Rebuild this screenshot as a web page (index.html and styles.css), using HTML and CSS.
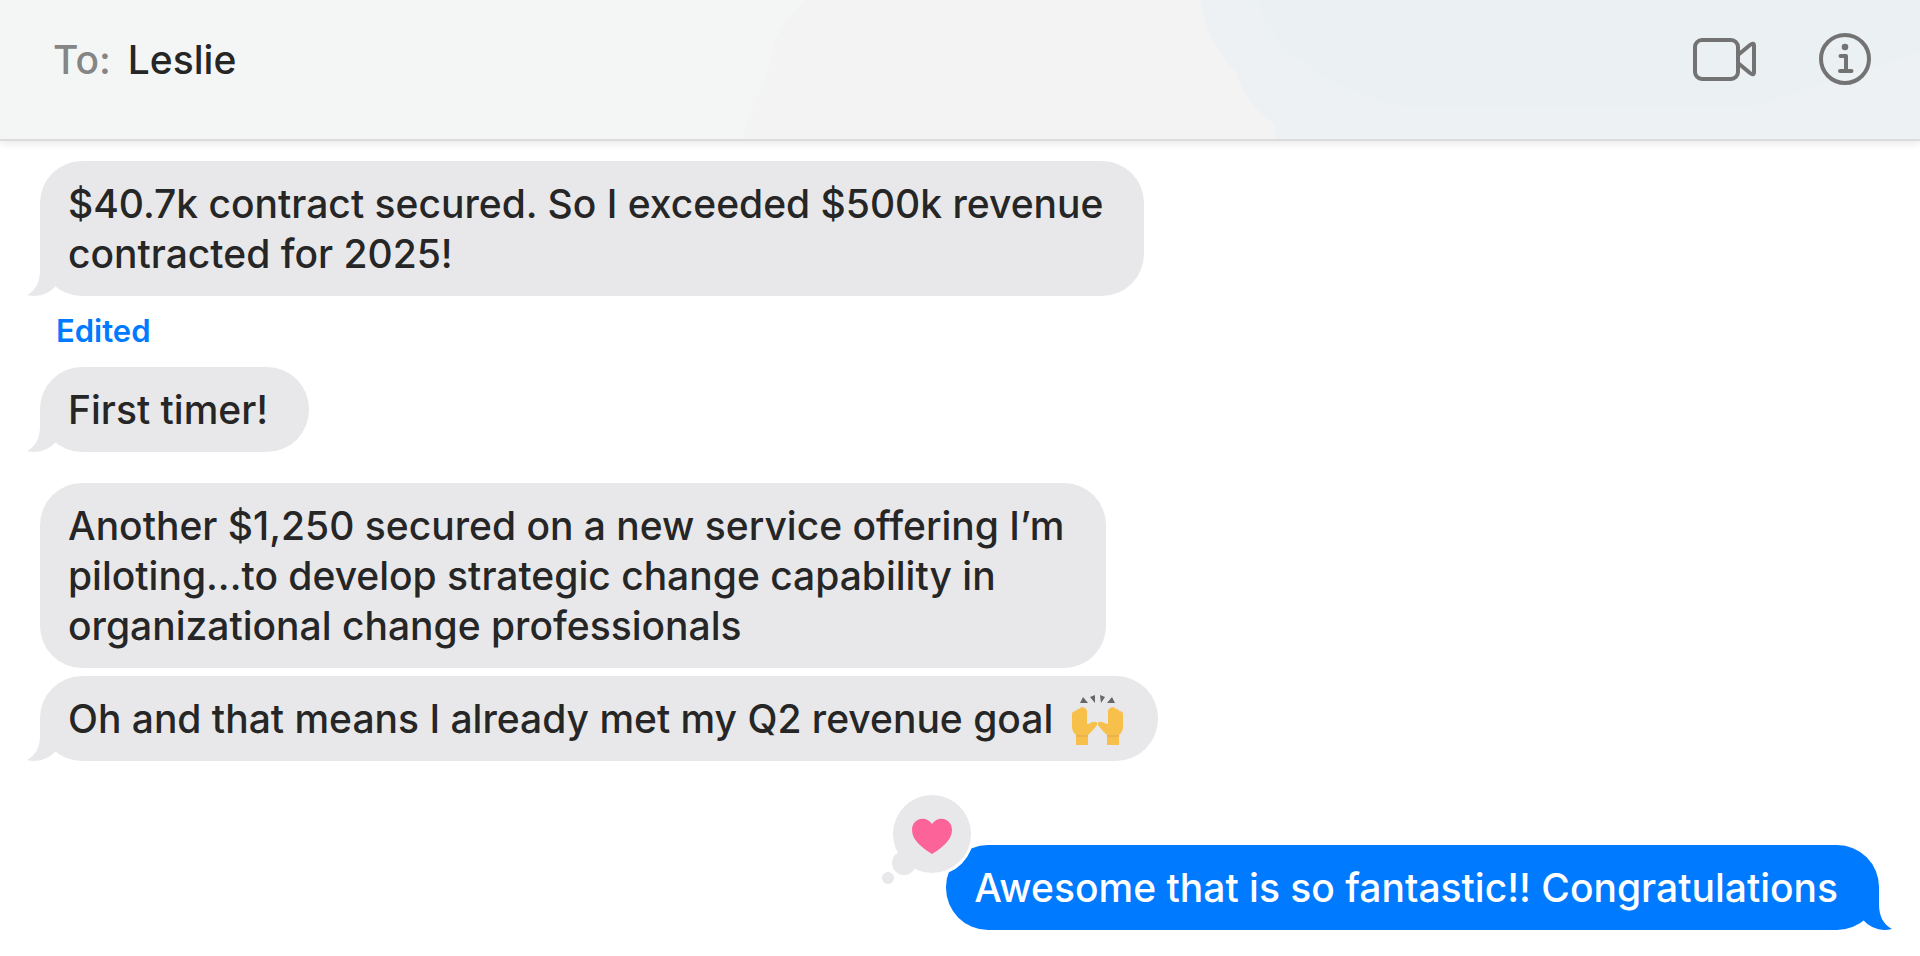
FILE: index.html
```html
<!DOCTYPE html>
<html lang="en">
<head>
    <meta charset="UTF-8">
    <meta name="viewport" content="width=device-width, initial-scale=1.0">
    <title>Messages - Leslie</title>
    <link rel="stylesheet" href="styles.css">
</head>
<body>
    <!-- Tail shape shared by all bubbles -->
    <svg class="defs" aria-hidden="true">
        <symbol id="tail" viewBox="0 0 30 56">
            <path d="M13 12V30C13 42 9 50 0 55Q17 59 29 46V12Z"/>
        </symbol>
    </svg>

    <header class="header">
        <svg class="header-bg" viewBox="0 0 1920 139" preserveAspectRatio="none" aria-hidden="true">
            <path fill="#f4f6f5" d="M0 0H806Q778 24 772 50C770 85 743 112 743 139H0Z"/>
            <path fill="#edf1f4" d="M1200 0C1205 30 1218 55 1236 72C1243 96 1258 114 1275 124V139H1920V0Z"/>
            <path fill="#ebf0f3" d="M1257 0C1270 45 1320 85 1400 106H1755L1920 52V0Z"/>
        </svg>
        <div class="recipient">
            <span class="to">To:</span>
            <h1 class="name">Leslie</h1>
        </div>
        <div class="actions">
            <button type="button" aria-label="Start video call">
                <svg width="64" height="52" viewBox="0 0 64 52">
                    <rect x="2" y="7" width="43" height="39" rx="7"/>
                    <path d="M45 22L57 12Q61 9 61 13V39Q61 43 57 40L45 30"/>
                </svg>
            </button>
            <button type="button" aria-label="Details">
                <svg width="52" height="52" viewBox="0 0 52 52">
                    <circle cx="26" cy="26" r="24"/>
                    <circle class="dot" cx="26" cy="14" r="3.3"/>
                    <path d="M21.5 23H27V38M21 38H32.5"/>
                </svg>
            </button>
        </div>
    </header>

    <main class="messages">
        <div class="bubble received">
            $40.7k contract secured. So I exceeded $500k revenue<br>
            contracted for 2025!
            <svg class="tail" aria-hidden="true"><use href="#tail"/></svg>
        </div>
        <button type="button" class="edited">Edited</button>

        <div class="bubble received">
            First timer!
            <svg class="tail" aria-hidden="true"><use href="#tail"/></svg>
        </div>

        <div class="bubble received group">
            Another $1,250 secured on a new service offering I’m<br>
            piloting...to develop strategic change capability in<br>
            organizational change professionals
        </div>
        <div class="bubble received next">
            Oh and that means I already met my Q2 revenue goal
            <svg class="hands" role="img" aria-label="Raising hands" viewBox="0 0 54 52">
                <g id="hand">
                    <path fill="#f6c04b" d="M5 50V40C2 37 1 35 1 32V19Q1 16 5 16Q5 14 8 14Q9 12 12 12Q16 14 16 16V29C19 29 20 27 22 27Q27 26 26 30C24 33 21 36 17 40V50Z"/>
                    <path fill="none" stroke="#dfa650" d="M5 41H17"/>
                </g>
                <use href="#hand" transform="matrix(-1 0 0 1 53 0)"/>
                <path fill="#666" d="M12 2L17 8L9 8ZM19 2L24 0V8ZM29 0L34 2L30 8ZM41 2L44 8L36 8Z"/>
            </svg>
            <svg class="tail" aria-hidden="true"><use href="#tail"/></svg>
        </div>

        <div class="bubble sent">
            Awesome that is so fantastic!! Congratulations
            <svg class="tail" aria-hidden="true"><use href="#tail"/></svg>
            <svg class="reaction" role="img" aria-label="Loved" viewBox="0 0 92 92">
                <circle fill="#fff" cx="50" cy="42" r="42"/>
                <circle cx="50" cy="42" r="39"/>
                <circle cx="22" cy="71" r="12"/>
                <circle cx="6" cy="86" r="6"/>
                <path fill="#fc6399" d="M50 62C42 57 30 49 30 38C30 26 44 23 50 32C56 23 70 26 70 38C70 49 58 57 50 62Z"/>
            </svg>
        </div>
    </main>
</body>
</html>
```
FILE: styles.css
```css
:root {
    --received: #e8e8ea;
    --blue: #007aff;
    --text: #262626;
    --icon: #737373;
}

* {
    margin: 0;
    padding: 0;
    box-sizing: border-box;
}

body {
    font-family: Inter, "Liberation Sans", sans-serif;
    font-size: 39px;
    font-weight: 500;
    line-height: 50px;
    color: var(--text);
    background-color: #fff;
}

button {
    border: none;
    background: none;
    font: inherit;
    cursor: pointer;
}

.defs {
    position: absolute;
    width: 0;
    height: 0;
}

.header {
    position: relative;
    display: flex;
    justify-content: space-between;
    align-items: center;
    padding: 33px 49px 54px 53px;
    background-color: #f3f3f3;
    border-bottom: 2px solid #dcdcdc;
    box-shadow: 0 2px 8px rgba(0, 0, 0, 0.1);
}

.header-bg {
    position: absolute;
    top: 0;
    left: 0;
    width: 100%;
    height: 100%;
}

.recipient,
.actions {
    position: relative;
    display: flex;
    align-items: center;
}

.recipient {
    gap: 17px;
    padding-top: 2px;
}

.to {
    color: #858585;
}

.name {
    font-size: 39px;
    font-weight: 500;
}

.actions {
    gap: 62px;
}

.actions svg {
    display: block;
    fill: none;
    stroke: var(--icon);
    stroke-width: 4;
    stroke-linecap: round;
    stroke-linejoin: round;
}

.actions .dot {
    fill: var(--icon);
    stroke: none;
}

.messages {
    display: flex;
    flex-direction: column;
    align-items: flex-start;
    padding: 20px 41px 28px 40px;
}

.bubble {
    position: relative;
    padding: 18px 41px 17px 28px;
    border-radius: 42px;
}

.received {
    background-color: var(--received);
    fill: var(--received);
}

.sent {
    align-self: flex-end;
    margin-top: 84px;
    background-color: var(--blue);
    fill: var(--blue);
    color: #fff;
}

.group {
    margin-top: 31px;
}

.next {
    margin-top: 8px;
}

.edited {
    margin: 10px 0 11px 16px;
    font-size: 31px;
    font-weight: 600;
    color: var(--blue);
}

.tail {
    position: absolute;
    left: -13px;
    bottom: 0;
    width: 30px;
    height: 56px;
}

.sent .tail {
    left: auto;
    right: -13px;
    transform: scaleX(-1);
}

.hands {
    width: 54px;
    height: 52px;
    margin: -4px -8px -4px 7px;
    vertical-align: -10px;
}

.reaction {
    position: absolute;
    left: -64px;
    top: -53px;
    width: 92px;
    height: 92px;
    fill: var(--received);
}
```
